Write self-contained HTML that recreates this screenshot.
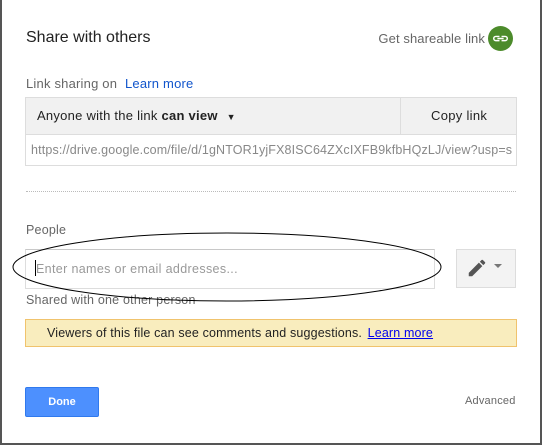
<!DOCTYPE html>
<html><head><style>
body{margin:0;width:542px;height:445px;background:#fff;position:relative;overflow:hidden;font-family:"Liberation Sans",Arial,sans-serif;}
.a{position:absolute;white-space:nowrap;}
</style></head><body>
<div class="a" style="left:0;top:0;width:2px;height:445px;background:#555"></div>
<div class="a" style="left:540px;top:0;width:2px;height:445px;background:#555"></div>
<div class="a" style="left:0;top:443px;width:542px;height:2px;background:#555"></div>
<div class="a" style="left:26px;top:29px;font-size:16px;color:#222">Share with others</div>
<div class="a" style="right:57px;top:31px;font-size:13px;color:#666;letter-spacing:0.1px">Get shareable link</div>
<svg class="a" style="left:488px;top:26px" width="25" height="25" viewBox="0 0 24 24"><circle cx="12" cy="12" r="12" fill="#4c8b2b"/><path d="M7.5 9.3h3.5v1.4H7.5a1.3 1.3 0 0 0 0 2.6h3.5v1.4H7.5a2.7 2.7 0 0 1 0-5.4zM13 9.3h3.5a2.7 2.7 0 0 1 0 5.4H13v-1.4h3.5a1.3 1.3 0 0 0 0-2.6H13zM9 11.3h6v1.4H9z" fill="#fff"/></svg>
<div class="a" style="left:26px;top:76px;font-size:13px;color:#666;letter-spacing:0.2px">Link sharing on <span style="color:#15c;margin-left:4px">Learn more</span></div>
<div class="a" style="left:25px;top:97px;width:490px;height:36px;background:#f1f1f1;border:1px solid #ddd"></div>
<div class="a" style="left:400px;top:98px;width:1px;height:36px;background:#ddd"></div>
<div class="a" style="left:37px;top:108px;font-size:13px;color:#222;letter-spacing:0.25px">Anyone with the link <b>can view</b> <span style="font-size:9px;margin-left:5px">▼</span></div>
<div class="a" style="left:431px;top:108px;font-size:13px;color:#222;letter-spacing:0.3px">Copy link</div>
<div class="a" style="left:25px;top:134px;width:490px;height:31px;border:1px solid #ddd;border-top:none"></div>
<div class="a" style="left:31px;top:143px;font-size:12.5px;color:#888;width:481px;overflow:hidden;letter-spacing:0.15px">https://drive.google.com/file/d/1gNTOR1yjFX8ISC64ZXcIXFB9kfbHQzLJ/view?usp=sharing</div>
<div class="a" style="left:26px;top:191px;width:490px;border-top:1px dotted #bbb"></div>
<div class="a" style="left:26px;top:223px;font-size:12.5px;color:#666;letter-spacing:0.2px">People</div>
<div class="a" style="left:25px;top:249px;width:408px;height:38px;border:1px solid #ddd;border-top-color:#c8c8c8"></div>
<div class="a" style="left:35px;top:260px;width:1px;height:16px;background:#000"></div>
<div class="a" style="left:36px;top:262px;font-size:12.5px;color:#999;letter-spacing:0.35px">Enter names or email addresses...</div>
<div class="a" style="left:456px;top:249px;width:58px;height:37px;background:#f3f3f3;border:1px solid #ddd"></div>
<svg class="a" style="left:466px;top:257px" width="22" height="22" viewBox="0 0 24 24"><path d="M3 17.25V21h3.75L17.81 9.94l-3.75-3.75L3 17.25zM20.71 7.04a1 1 0 0 0 0-1.41l-2.34-2.34a1 1 0 0 0-1.41 0l-1.83 1.83 3.75 3.75 1.83-1.83z" fill="#555"/></svg>
<div class="a" style="left:494px;top:264px;width:0;height:0;border-left:4px solid transparent;border-right:4px solid transparent;border-top:4px solid #777"></div>
<div class="a" style="left:26px;top:293px;font-size:12.5px;color:#666;letter-spacing:0.2px">Shared with one other person</div>
<svg class="a" style="left:0;top:0" width="542" height="445"><ellipse cx="227" cy="267" rx="214" ry="34" fill="none" stroke="#000" stroke-width="1"/></svg>
<div class="a" style="left:25px;top:319px;width:490px;height:26px;background:#f9edbe;border:1px solid #f0c36d"></div>
<div class="a" style="left:47px;top:326px;font-size:12.5px;color:#222;letter-spacing:0.15px">Viewers of this file can see comments and suggestions. <span style="color:#00e;text-decoration:underline;margin-left:2px">Learn more</span></div>
<div class="a" style="left:25px;top:387px;width:72px;height:28px;background:#4d90fe;border:1px solid #3079ed;border-radius:2px;color:#fff;font-weight:bold;font-size:11px;text-align:center;line-height:28px">Done</div>
<div class="a" style="left:465px;top:395px;font-size:11px;color:#666;letter-spacing:0.2px">Advanced</div>
</body></html>
